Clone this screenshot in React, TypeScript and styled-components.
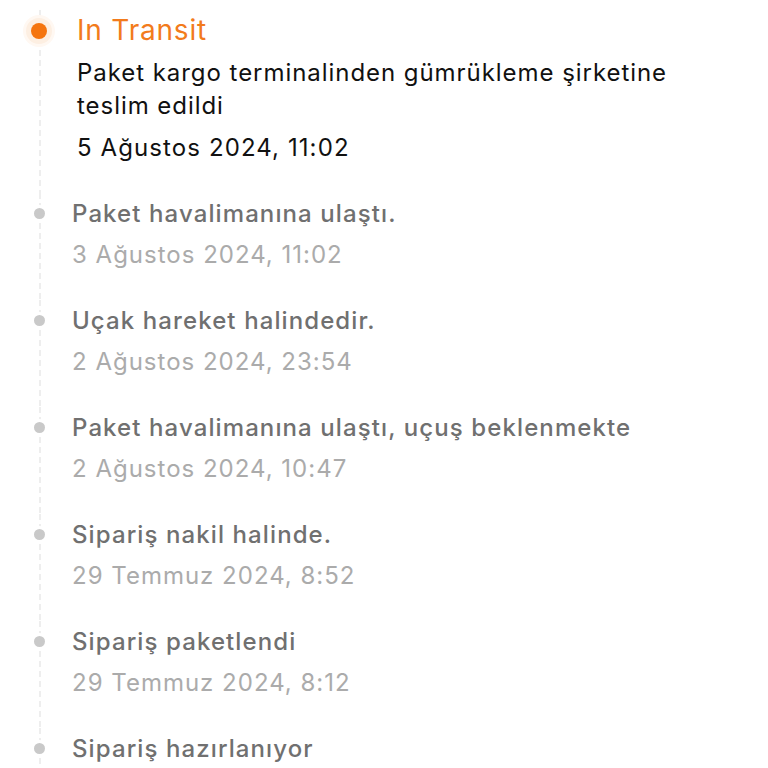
import React from "react";
import styled, { createGlobalStyle } from "styled-components";

const GlobalStyle = createGlobalStyle`
    html, body {
        margin: 0;
        padding: 0;
        background: #ffffff;
    }
    body {
        font-family: Inter, "Noto Sans", "Liberation Sans", sans-serif;
        -webkit-font-smoothing: antialiased;
    }
`;

// the last entry's date sits below the fold in the screenshot
const EVENTS = [
    { title: "Paket havalimanına ulaştı.", date: "3 Ağustos 2024, 11:02" },
    { title: "Uçak hareket halindedir.", date: "2 Ağustos 2024, 23:54" },
    { title: "Paket havalimanına ulaştı, uçuş beklenmekte", date: "2 Ağustos 2024, 10:47" },
    { title: "Sipariş nakil halinde.", date: "29 Temmuz 2024, 8:52" },
    { title: "Sipariş paketlendi", date: "29 Temmuz 2024, 8:12" },
    { title: "Sipariş hazırlanıyor", date: "" },
];

export default function App() {
    return (
        <>
            <GlobalStyle />
            <Timeline>
                <Item>
                    <Rail $top={20}>
                        <ActiveDot />
                    </Rail>
                    <Content $indent={5}>
                        <StatusTitle>In Transit</StatusTitle>
                        <Description>
                            Paket kargo terminalinden gümrükleme şirketine teslim edildi
                        </Description>
                        <ActiveDate>5 Ağustos 2024, 11:02</ActiveDate>
                    </Content>
                </Item>
                {EVENTS.map((ev) => (
                    <Item key={ev.title}>
                        <Rail $top={15}>
                            <Dot />
                        </Rail>
                        <Content $indent={0}>
                            <EventTitle>{ev.title}</EventTitle>
                            {ev.date && <EventDate>{ev.date}</EventDate>}
                        </Content>
                    </Item>
                ))}
            </Timeline>
        </>
    );
}

const Timeline = styled.div`
    display: flex;
    flex-direction: column;
    padding-top: 10px;
    height: 768px;
    overflow: hidden;
    box-sizing: border-box;
`;

const Item = styled.div`
    display: grid;
    grid-template-columns: 72px 1fr;
    padding-bottom: 25px;
`;

const Rail = styled.div<{ $top: number }>`
    display: flex;
    justify-content: center;
    align-items: flex-start;
    padding-top: ${(p) => p.$top}px;
    width: 78px;
    margin-bottom: -25px;
    background-image: repeating-linear-gradient(
        to bottom,
        #eeeeee 0,
        #eeeeee 6px,
        transparent 6px,
        transparent 10px
    );
    background-size: 2px 100%;
    background-position: 39px 0;
    background-repeat: no-repeat;
`;

const Dot = styled.span`
    width: 11px;
    height: 11px;
    border-radius: 50%;
    background: #c9c9c9;
    box-shadow: 0 0 0 3px #ffffff;
    margin-left: 1px;
`;

const ActiveDot = styled.span`
    width: 16px;
    height: 16px;
    margin-top: -7px;
    border-radius: 50%;
    background: #f5750f;
    box-shadow: 0 0 0 5px #fdefe2, 0 0 0 8px #fff8f2;
`;

const Content = styled.div<{ $indent: number }>`
    display: flex;
    flex-direction: column;
    padding-left: ${(p) => p.$indent}px;
    padding-right: 20px;
`;

const StatusTitle = styled.div`
    font-size: 28px;
    line-height: 40px;
    letter-spacing: 0.8px;
    color: #f27b1c;
    font-weight: 400;
`;

const Description = styled.div`
    margin-top: 6px;
    font-size: 24px;
    line-height: 33px;
    letter-spacing: 0.95px;
    color: #111111;
    max-width: 640px;
`;

const ActiveDate = styled.div`
    margin-top: 5px;
    font-size: 24px;
    line-height: 41px;
    letter-spacing: 1.1px;
    color: #111111;
`;

const EventTitle = styled.div`
    font-size: 24px;
    line-height: 41px;
    letter-spacing: 1.1px;
    font-weight: 500;
    color: #707070;
    white-space: nowrap;
`;

const EventDate = styled.div`
    font-size: 24px;
    line-height: 41px;
    letter-spacing: 1px;
    color: #ababab;
    white-space: nowrap;
`;
